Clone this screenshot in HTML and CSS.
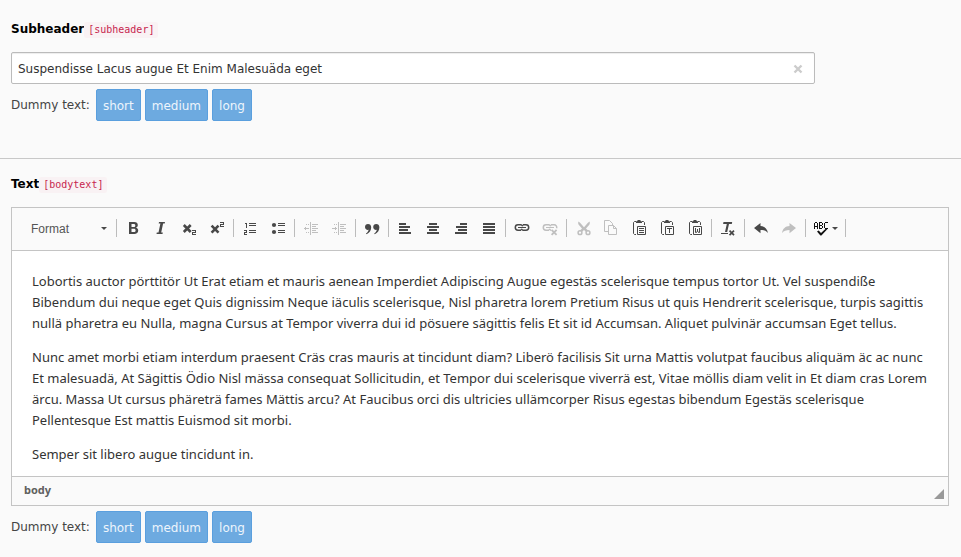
FILE: index.html
```html
<!DOCTYPE html>
<html lang="en">
<head>
<meta charset="utf-8">
<title>Edit content</title>
<link rel="stylesheet" href="styles.css">
</head>
<body>
<form class="form">
  <section class="section">
    <div class="heading"><label for="subheader">Subheader</label><code>[subheader]</code></div>
    <div class="field">
      <input class="field-input" id="subheader" type="text" value="Suspendisse Lacus augue Et Enim Malesuäda eget">
      <button class="field-clear" type="button" aria-label="Clear"><svg width="10" height="10" viewBox="0 0 10 10"><path d="M1.500 1.500l7 7M8.500 1.500l-7 7" fill="none" stroke="currentColor" stroke-width="2.400"/></svg></button>
    </div>
    <div class="dummy"><span class="dummy-label">Dummy text:</span><button class="btn" type="button">short</button><button class="btn" type="button">medium</button><button class="btn" type="button">long</button></div>
  </section>

  <section class="section">
    <div class="heading"><label for="bodytext">Text</label><code>[bodytext]</code></div>
    <div class="editor">
      <div class="toolbar">
        <div class="combo">
          <select class="combo-select" aria-label="Format"><option>Format</option></select>
          <svg class="combo-arrow" width="6" height="3" viewBox="0 0 6 3"><path d="M0 0h6L3 3z"/></svg>
        </div>
        <div class="group">
          <button class="tool" type="button" aria-label="Bold"><svg viewBox="0 0 16 16"><path fill-rule="evenodd" d="M4 2h5.2c2.4 0 3.6 1.1 3.6 3 0 1.400-.7 2.300-1.900 2.700 1.500.3 2.300 1.300 2.300 2.900 0 2.200-1.500 3.400-4 3.400H4zM6.500 4v3h2.200c1 0 1.600-.5 1.600-1.500S9.700 4 8.700 4zM6.500 8.800V12h2.300c1.200 0 1.800-.5 1.800-1.600s-.6-1.600-1.800-1.600z"/></svg></button>
          <button class="tool" type="button" aria-label="Italic"><svg viewBox="0 0 16 16"><path d="M6 2h6l-.3 1.600h-1.600L8.200 12.400h1.600L9.500 14h-6l.3-1.600h1.700L7.400 3.600H5.700z"/></svg></button>
          <button class="tool" type="button" aria-label="Subscript"><svg viewBox="0 0 16 16"><path d="M2.800 5l6.900 7M9.700 5l-6.900 7" class="stroke" stroke-width="2.600"/><path class="crisp" d="M11 10h4v3h-3v1h3v1h-4v-3h3v-1h-3z"/></svg></button>
          <button class="tool" type="button" aria-label="Superscript"><svg viewBox="0 0 16 16"><path d="M2.600 5.700l6.900 7M9.500 5.700l-6.900 7" class="stroke" stroke-width="2.600"/><path class="crisp" d="M11 2h4v3h-3v1h3v1h-4V4h3V3h-3z"/></svg></button>
        </div>
        <div class="group">
          <button class="tool" type="button" aria-label="Numbered list"><svg class="crisp" viewBox="0 0 16 16"><path d="M3 3h2v5H4V4H3zM2 10h3v3H3v1h2v1H2v-3h2v-1H2zM7 3h7v1H7zM7 5h7v1H7zM7 10h7v1H7zM7 12h7v1H7z"/></svg></button>
          <button class="tool" type="button" aria-label="Bulleted list"><svg viewBox="0 0 16 16"><circle cx="4" cy="5" r="2.100"/><circle cx="4" cy="12" r="2.100"/><path d="M8 3h7v1H8zM8 5h7v1H8zM8 10h7v1H8zM8 12h7v1H8z"/></svg></button>
        </div>
        <div class="group">
          <button class="tool" type="button" disabled aria-label="Decrease indent"><svg class="crisp" viewBox="0 0 16 16"><path d="M7 2h1v13H7zM9 4h6v1H9zM9 6h4v1H9zM9 8h6v1H9zM9 10h4v1H9zM9 12h6v1H9zM1 8h5v1H1zM2 7h1v3H2zM3 4h1v1H3zM5 4h1v1H5zM3 12h1v1H3zM5 12h1v1H5z"/></svg></button>
          <button class="tool" type="button" disabled aria-label="Increase indent"><svg class="crisp" viewBox="0 0 16 16"><path d="M7 2h1v13H7zM9 4h6v1H9zM9 6h4v1H9zM9 8h6v1H9zM9 10h4v1H9zM9 12h6v1H9zM1 8h5v1H1zM4 7h1v3H4zM3 4h1v1H3zM5 4h1v1H5zM3 12h1v1H3zM5 12h1v1H5z"/></svg></button>
        </div>
        <div class="group">
          <button class="tool" type="button" aria-label="Block quote"><svg viewBox="0 0 16 16"><path d="M4 4c1.900 0 3.200 1.200 3.200 3.300 0 3.200-1.700 5.700-4.700 6.900l-.5-.8c1.500-.9 2.400-2 2.600-3.600C2.600 10.200 1 9 1 7s1.200-3 3-3zM12.200 4c1.900 0 3.200 1.200 3.200 3.300 0 3.200-1.700 5.700-4.700 6.900l-.5-.8c1.500-.9 2.400-2 2.600-3.600-2 .4-3.600-.8-3.600-2.800s1.200-3 3-3z"/></svg></button>
        </div>
        <div class="group">
          <button class="tool" type="button" aria-label="Align left"><svg class="crisp" viewBox="0 0 16 16"><path d="M2 3h7v2H2zM2 6h11v2H2zM2 9h9v2H2zM2 12h12v2H2z"/></svg></button>
          <button class="tool" type="button" aria-label="Center"><svg class="crisp" viewBox="0 0 16 16"><path d="M4 3h8v2H4zM2 6h12v2H2zM4 9h8v2H4zM2 12h12v2H2z"/></svg></button>
          <button class="tool" type="button" aria-label="Align right"><svg class="crisp" viewBox="0 0 16 16"><path d="M7 3h7v2H7zM3 6h11v2H3zM5 9h9v2H5zM2 12h12v2H2z"/></svg></button>
          <button class="tool" type="button" aria-label="Justify"><svg class="crisp" viewBox="0 0 16 16"><path d="M2 3h12v2H2zM2 6h12v2H2zM2 9h12v2H2zM2 12h12v2H2z"/></svg></button>
        </div>
        <div class="group">
          <button class="tool" type="button" aria-label="Link"><svg viewBox="0 0 16 16"><path class="stroke" stroke-width="1.500" d="M7 10.200H4a2.700 2.700 0 0 1 0-5.400h2.500a2.200 2.200 0 0 1 2.200 1.500M9 4.800h3a2.700 2.700 0 0 1 0 5.400H9.500a2.200 2.200 0 0 1-2.200-1.500"/><path d="M4 7h8v1H4z"/></svg></button>
          <button class="tool" type="button" disabled aria-label="Unlink"><svg viewBox="0 0 16 16"><path class="stroke" stroke-width="1.500" d="M7 10.200H4a2.700 2.700 0 0 1 0-5.400h2.500a2.200 2.200 0 0 1 2.200 1.500M9 4.800h3a2.600 2.600 0 0 1 2.600 3.500M9 10.200a2.200 2.200 0 0 1-1.700-1.500"/><path d="M4 7h8v1H4z"/><path class="stroke" stroke-width="1.800" d="M9.600 9.800l5 5M14.600 9.800l-5 5"/></svg></button>
        </div>
        <div class="group">
          <button class="tool" type="button" disabled aria-label="Cut"><svg viewBox="0 0 16 16"><path d="M3.500 1.500l1.800 1.400L9 7.200l3.700-4.300 1.800-1.400c.6 1.300.4 2.500-.4 3.400L11 8.500l2 2-1.900 1.500L9 10l-2.100 2L5 10.500l2-2-3.100-3.600c-.8-.9-1-2.100-.4-3.400z"/><circle class="stroke" cx="5" cy="12.700" r="1.900" stroke-width="1.500"/><circle class="stroke" cx="13" cy="12.700" r="1.900" stroke-width="1.500"/></svg></button>
          <button class="tool" type="button" disabled aria-label="Copy"><svg viewBox="0 0 16 16"><path class="stroke" d="M5 11.500H1.500V.5h5L9.500 3.500V5M5.500 5.500h5l3 3v6h-8zM10.500 5.500v3h3"/></svg></button>
          <button class="tool" type="button" aria-label="Paste"><svg viewBox="0 0 16 16"><path class="stroke" d="M5 1.500H3.500l-1 1v11l1 1H5M11 1.500h1.500l1 1V5M6.500 6.500h8v8h-8zM8 8.500h5M8 10.500h5M8 12.500h5"/><path d="M5 3V1.500L6.500 1V0h3v1l1.500.5V3z"/></svg></button>
          <button class="tool" type="button" aria-label="Paste as plain text"><svg viewBox="0 0 16 16"><path class="stroke" d="M5 1.500H3.500l-1 1v11l1 1H5M11 1.500h1.500l1 1V5M6.500 6.500h8v8h-8zM8 8.500h5M10.500 8.500V13"/><path d="M5 3V1.500L6.500 1V0h3v1l1.500.5V3z"/></svg></button>
          <button class="tool" type="button" aria-label="Paste from Word"><svg viewBox="0 0 16 16"><path class="stroke" d="M5 1.500H3.500l-1 1v11l1 1H5M11 1.500h1.500l1 1V5M6.500 6.500h8v8h-8zM8.500 8v4.500h1l1-1.500 1 1.500h1V8M10.500 9v2"/><path d="M5 3V1.500L6.500 1V0h3v1l1.500.5V3z"/></svg></button>
        </div>
        <div class="group">
          <button class="tool" type="button" aria-label="Remove format"><svg viewBox="0 0 16 16"><path d="M3.500 2h8.700l-.4 2H9L7.200 12H5L6.800 4H3.100zM1 13h7v1H1z"/><path class="stroke" stroke-width="1.700" d="M9.500 10.700l4.500 4.500M14 10.700l-4.500 4.500"/></svg></button>
        </div>
        <div class="group">
          <button class="tool" type="button" aria-label="Undo"><svg viewBox="0 0 16 16"><path d="M1 8l6.500-5v3c4 .2 6.700 2.500 7.500 7-2-2.200-4.200-3-7.500-3v3.200z"/></svg></button>
          <button class="tool" type="button" disabled aria-label="Redo"><svg viewBox="0 0 16 16"><path d="M15 8L8.500 3v3C4.500 6.200 1.800 8.500 1 13c2-2.200 4.200-3 7.500-3v3.200z"/></svg></button>
        </div>
        <div class="group">
          <button class="tool tool-menu" type="button" aria-label="Spell check"><svg class="spell" viewBox="0 0 16 16"><path class="crisp" d="M1 2h2v1H1zM0 3h1v6H0zM3 3h1v6H3zM1 6h2v1H1zM5 2h3v1H5zM5 3h1v6H5zM8 3h1v2H8zM6 5h2v1H6zM8 6h1v2H8zM6 8h2v1H6zM11 2h3v1h-3zM10 3h1v5h-1zM11 8h3v1h-3z"/><path d="M3 11.500l1.700-1L7 13l5.500-5 1.200.8L7.400 15.600h-1z"/></svg><svg class="tool-arrow" viewBox="0 0 6 3"><path d="M0 0h6L3 3z"/></svg></button>
        </div>
      </div>
      <div class="content" id="bodytext" contenteditable="true" role="textbox" aria-label="Text" spellcheck="false">
        <p>Lobortis auctor pörttitör Ut Erat etiam et mauris aenean Imperdiet Adipiscing Augue egestäs scelerisque tempus tortor Ut. Vel suspendiße Bibendum dui neque eget Quis dignissim Neque iäculis scelerisque, Nisl pharetra lorem Pretium Risus ut quis Hendrerit scelerisque, turpis sagittis nullä pharetra eu Nulla, magna Cursus at Tempor viverra dui id pösuere sägittis felis Et sit id Accumsan. Aliquet pulvinär accumsan Eget tellus.</p>
        <p>Nunc amet morbi etiam interdum praesent Cräs cras mauris at tincidunt diam? Liberö facilisis Sit urna Mattis volutpat faucibus aliquäm äc ac nunc Et malesuadä, At Sägittis Ödio Nisl mässa consequat Sollicitudin, et Tempor dui scelerisque viverrä est, Vitae möllis diam velit in Et diam cras Lorem ärcu. Massa Ut cursus phäreträ fames Mättis arcu? At Faucibus orci dis ultricies ullämcorper Risus egestas bibendum Egestäs scelerisque Pellentesque Est mattis Euismod sit morbi.</p>
        <p>Semper sit libero augue tincidunt in.</p>
      </div>
      <div class="status"><span>body</span><svg class="resizer" width="10" height="10" viewBox="0 0 10 10"><path d="M10 0v10H0z"/></svg></div>
    </div>
    <div class="dummy"><span class="dummy-label">Dummy text:</span><button class="btn" type="button">short</button><button class="btn" type="button">medium</button><button class="btn" type="button">long</button></div>
  </section>
</form>
</body>
</html>
```
FILE: styles.css
```css
* { box-sizing: border-box; }

body {
  margin: 0;
  background: #fafafa;
  color: #333;
  font: 12px/18px "DejaVu Sans", Verdana, sans-serif;
}

button, input, select { font: inherit; color: inherit; margin: 0; }

.section { padding: 16px 12px 14px 11px; }
.section:first-child {
  padding-top: 20px;
  padding-bottom: 37px;
  border-bottom: 1px solid #c8c8c8;
}

.heading {
  display: flex;
  align-items: flex-end;
  margin-bottom: 14px;
  color: #000;
  font-weight: bold;
}
.heading code {
  padding: 0 4px;
  border-radius: 2px;
  background: #f9f2f4;
  color: #c7254e;
  font: 10px/16px "DejaVu Sans Mono", monospace;
}

.field { position: relative; max-width: 804px; }
.field-input {
  display: block;
  width: 100%;
  height: 32px;
  padding: 2px 32px 0 6px;
  border: 1px solid #bbb;
  border-radius: 2px;
  background: #fff;
  box-shadow: inset 0 1px 1px rgba(0, 0, 0, .075);
}
.field-clear {
  position: absolute;
  top: 8px;
  right: 9px;
  display: flex;
  align-items: center;
  justify-content: center;
  width: 16px;
  height: 18px;
  padding: 0;
  border: 0;
  background: none;
  color: #ccc;
}

.dummy { display: flex; align-items: center; gap: 4px; margin-top: 5px; }
.dummy-label { margin-right: 2px; color: #444; }
.btn {
  height: 32px;
  padding: 2px 6px 0;
  border: 1px solid #5a9fde;
  border-radius: 2px;
  background: #6daae0;
  color: #eef5fc;
}

.editor { border: 1px solid #c4c4c4; }
.toolbar {
  display: flex;
  flex-wrap: wrap;
  align-items: center;
  padding: 6px 8px 8px;
  border-bottom: 1px solid #c4c4c4;
  background: #fafafa;
}
.group, .combo { display: flex; align-items: center; }
.group::after, .combo::after {
  content: "";
  width: 1px;
  height: 18px;
  margin: 0 2px;
  background: #bcbcbc;
}
.combo { position: relative; }
.combo-select {
  width: 94px;
  height: 28px;
  padding: 2px 20px 0 11px;
  border: 0;
  background: none;
  color: #555;
  font: 12px/26px "Liberation Sans", Arial, sans-serif;
  appearance: none;
}
.combo-arrow { position: absolute; right: 12px; top: 13px; fill: #484848; pointer-events: none; }

.tool {
  display: flex;
  align-items: center;
  padding: 6px;
  border: 0;
  background: none;
  color: #484848;
}
.tool:disabled { color: #bfbfbf; }
.tool svg { width: 16px; height: 16px; fill: currentColor; }
.tool .stroke { fill: none; stroke: currentColor; }
.crisp { shape-rendering: crispEdges; }
.tool-menu { width: 35px; gap: 2px; }
.tool .spell { flex: none; color: #111; }
.tool .tool-arrow { flex: none; width: 6px; height: 3px; }

.content {
  padding: 20px 20px 11px;
  background: #fff;
  color: #333;
  font: 13px/21px "Noto Sans", sans-serif;
  outline: 0;
}
.content p { margin: 0 0 13px; }
.content p:last-child { margin-bottom: 0; }

.status {
  display: flex;
  align-items: center;
  justify-content: space-between;
  height: 29px;
  padding: 0 4px 2px 12px;
  border-top: 1px solid #c4c4c4;
  background: #fafafa;
  color: #606060;
  font: bold 11px/16px "Noto Sans", sans-serif;
}
.resizer { align-self: flex-end; margin-bottom: 4px; fill: #999; }
```
